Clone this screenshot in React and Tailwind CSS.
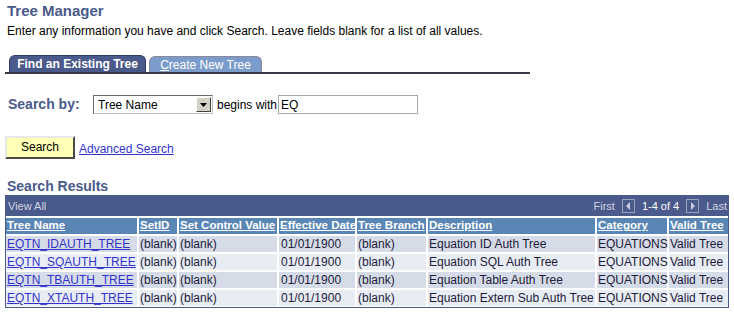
const rows = [
  ["EQTN_IDAUTH_TREE", "Equation ID Auth Tree"],
  ["EQTN_SQAUTH_TREE", "Equation SQL Auth Tree"],
  ["EQTN_TBAUTH_TREE", "Equation Table Auth Tree"],
  ["EQTN_XTAUTH_TREE", "Equation Extern Sub Auth Tree"],
];

const headers = [
  "Tree Name",
  "SetID",
  "Set Control Value",
  "Effective Date",
  "Tree Branch",
  "Description",
  "Category",
  "Valid Tree",
];

const PagerButton = ({ dir }) => (
  <span className="flex h-[14px] w-[13px] items-center justify-center border border-[#9aa3bd] bg-[#4a5a8a]">
    <svg width="6" height="8" viewBox="0 0 6 8">
      {dir === "left" ? (
        <path d="M5 0 L1 4 L5 8 Z" fill="#c8cde0" />
      ) : (
        <path d="M1 0 L5 4 L1 8 Z" fill="#c8cde0" />
      )}
    </svg>
  </span>
);

export default function App() {
  return (
    <div className="h-[314px] w-[734px] bg-white font-['Liberation_Sans',Arial,sans-serif] text-[12px] text-black">
      <div className="px-[7px] pt-[1px] text-[15px] font-bold leading-[20px] text-[#4a5a8a]">
        Tree Manager
      </div>
      <div className="mt-[3px] px-[7px] leading-[15px]">
        Enter any information you have and click Search. Leave fields blank for a list of all values.
      </div>

      <div className="ml-[5px] mt-[16px] flex w-[525px] items-end gap-[3px] border-b-2 border-[#3a3a4a] pl-[4px]">
        <div className="flex h-[17px] w-[137px] items-center justify-center rounded-t-[6px] border border-b-0 border-[#2e3a66] bg-[#4a5a8a] font-bold text-white">
          Find an Existing Tree
        </div>
        <div className="flex h-[16px] w-[113px] items-center justify-center rounded-t-[6px] border border-b-0 border-[#8a8a9a] bg-[#7b9ccb] text-white">
          <span>
            <span className="underline">C</span>reate New Tree
          </span>
        </div>
      </div>

      <div className="mt-[20px] flex items-center px-[8px]">
        <span className="w-[85px] text-[14px] font-bold text-[#4a5a8a]">Search by:</span>
        <div className="flex h-[19px] w-[120px] items-center justify-between border border-t-[#6a6a6a] border-l-[#6a6a6a] border-r-[#c0c0c0] border-b-[#c0c0c0] bg-white pl-[4px] pr-[1px]">
          <span>Tree Name</span>
          <span className="flex h-[15px] w-[15px] items-center justify-center border border-t-white border-l-white border-r-[#404040] border-b-[#404040] bg-[#d4d0c8]">
            <svg width="7" height="4" viewBox="0 0 7 4">
              <path d="M0 0 H7 L3.5 4 Z" fill="#000" />
            </svg>
          </span>
        </div>
        <span className="ml-[4px]">begins with</span>
        <div className="ml-[1px] flex h-[19px] w-[140px] items-center border border-[#a8a8a8] bg-white pl-[2px]">
          EQ
        </div>
      </div>

      <div className="mt-[21px] flex items-end px-[5px]">
        <button className="h-[23px] w-[70px] border-2 border-t-[#e8e8e8] border-l-[#e8e8e8] border-r-[#4a4a4a] border-b-[#4a4a4a] bg-[#ffffb5] pb-[2px] text-[12px] text-black">
          Search
        </button>
        <a className="mb-[1px] ml-[4px] text-[#3333cc] underline">Advanced Search</a>
      </div>

      <div className="mt-[19px] px-[7px] text-[14px] font-bold leading-[17px] text-[#4a5a8a]">
        Search Results
      </div>

      <div className="ml-[5px] w-[724px] border border-[#4a5a8a] bg-white">
        <div className="flex h-[20px] items-center justify-between bg-[#4a5a8a] pl-[2px] pr-[1px] text-[11px] text-[#d0d4e2]">
          <span>View All</span>
          <div className="flex items-center">
            <span className="mr-[7px]">First</span>
            <PagerButton dir="left" />
            <span className="mx-[7px] text-white">1-4 of 4</span>
            <PagerButton dir="right" />
            <span className="ml-[7px]">Last</span>
          </div>
        </div>
        <div className="grid grid-cols-[131px_38px_98px_76px_69px_167px_70px_59px] gap-[2px] pt-[2px] pb-[1px]">
          {headers.map((h) => (
            <div key={h} className="flex h-[16px] items-center overflow-hidden whitespace-nowrap bg-[#5a86b6] px-[1px] text-[11.5px] font-bold text-white">
              <span className="underline">{h}</span>
            </div>
          ))}
          {rows.map(([name, desc], i) => {
            const bg = i % 2 === 0 ? "bg-[#d5dce8]" : "bg-[#e8edf4]";
            const cell = `flex h-[16px] items-center whitespace-nowrap px-[1px] text-[#1e1a3a] ${bg}`;
            return [
              <div key={`${i}a`} className={cell}>
                <a className="text-[#3333cc] underline">{name}</a>
              </div>,
              <div key={`${i}b`} className={cell}>(blank)</div>,
              <div key={`${i}c`} className={cell}>(blank)</div>,
              <div key={`${i}d`} className={cell}>
                <span className="ml-[1px]">01/01/1900</span>
              </div>,
              <div key={`${i}e`} className={cell}>(blank)</div>,
              <div key={`${i}f`} className={cell}>{desc}</div>,
              <div key={`${i}g`} className={cell}>EQUATIONS</div>,
              <div key={`${i}h`} className={cell}>Valid Tree</div>,
            ];
          })}
        </div>
      </div>
    </div>
  );
}
